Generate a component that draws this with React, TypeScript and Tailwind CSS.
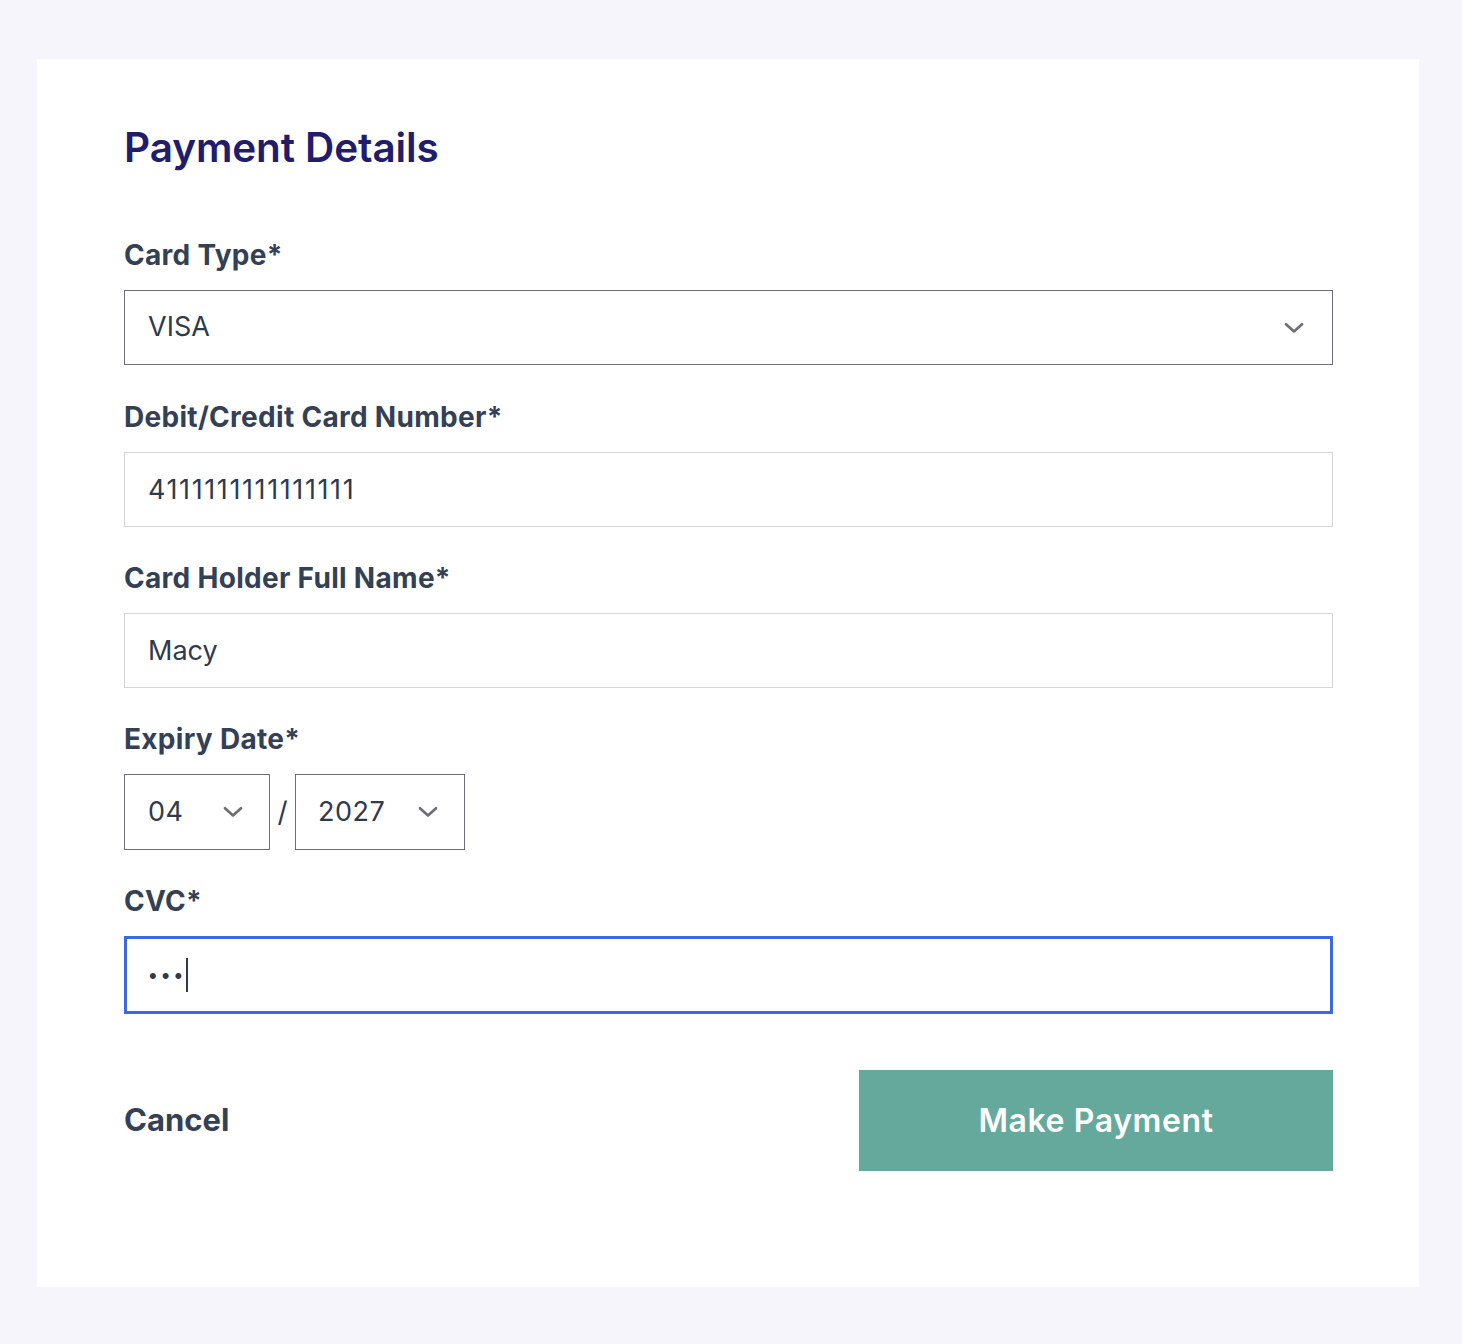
const labelCls = "block text-[28px] leading-[36px] font-bold tracking-[0.3px] text-[#344054] mb-[17px]";
const inputCls =
  "w-full h-[75px] border border-[#d6d6d9] bg-white px-[23px] text-[27px] text-[#2f3a4c] outline-none";

const Chevron = ({ className = "" }: { className?: string }) => (
  <svg viewBox="0 0 20 12" className={`w-[20px] h-[12px] text-[#6e6e78] ${className}`} fill="none">
    <path d="M2 2.2 10 9.4 18 2.2" stroke="currentColor" strokeWidth={2.7} strokeLinecap="round" strokeLinejoin="round" />
  </svg>
);

export default function App() {
  return (
    <div className="min-h-screen bg-[#f7f5fc] pl-[37px] pr-[43px] pt-[59px] pb-[58px] font-['Inter',sans-serif]">
      <div className="bg-white pl-[87px] pr-[86px] pt-[62px] pb-[116px]">
        <h1 className="text-[40.5px] leading-[54px] font-semibold text-[#221c6c] tracking-[-0.1px]">
          Payment Details
        </h1>

        <form className="mt-[62px]" onSubmit={(e) => e.preventDefault()}>
          <label className={labelCls}>Card Type*</label>
          <div className="h-[75px] border border-[#6e6e78] flex items-center justify-between pl-[23px] pr-[28px]">
            <span className="text-[27px] text-[#2f3a4c]">VISA</span>
            <Chevron />
          </div>

          <div className="mt-[34px]">
            <label className={labelCls}>Debit/Credit Card Number*</label>
            <input className={`${inputCls} tracking-[1.6px]`} defaultValue="4111111111111111" />
          </div>

          <div className="mt-[33px]">
            <label className={labelCls}>Card Holder Full Name*</label>
            <input className={inputCls} defaultValue="Macy" />
          </div>

          <div className="mt-[33px]">
            <label className={labelCls}>Expiry Date*</label>
            <div className="flex items-center">
              <div className="w-[146px] h-[76px] border border-[#6e6e78] flex items-center justify-between pl-[23px] pr-[26px]">
                <span className="text-[27px] text-[#2f3a4c] tracking-[0.5px]">04</span>
                <Chevron />
              </div>
              <span className="w-[25px] text-center text-[28px] text-[#2f3a4c]">/</span>
              <div className="w-[170px] h-[76px] border border-[#6e6e78] flex items-center justify-between pl-[22px] pr-[26px]">
                <span className="text-[27px] text-[#2f3a4c] tracking-[0.5px]">2027</span>
                <Chevron />
              </div>
            </div>
          </div>

          <div className="mt-[33px]">
            <label className={labelCls}>CVC*</label>
            <div className="h-[78px] border-[3px] border-[#3d68e0] flex items-center px-[22px]">
              <span className="text-[22px] tracking-[5px] text-[#2f3a4c] font-['Liberation_Sans',sans-serif]">
                •••
              </span>
              <span className="ml-[-1px] w-[2px] h-[34px] bg-[#2f3a4c]" />
            </div>
          </div>

          <div className="mt-[56px] flex items-center justify-between">
            <button type="button" className="text-[31px] font-bold text-[#344054]">
              Cancel
            </button>
            <button
              type="submit"
              className="w-[474px] h-[101px] bg-[#64a99b] text-white text-[32px] font-semibold tracking-[0.6px]"
            >
              Make Payment
            </button>
          </div>
        </form>
      </div>
    </div>
  );
}
